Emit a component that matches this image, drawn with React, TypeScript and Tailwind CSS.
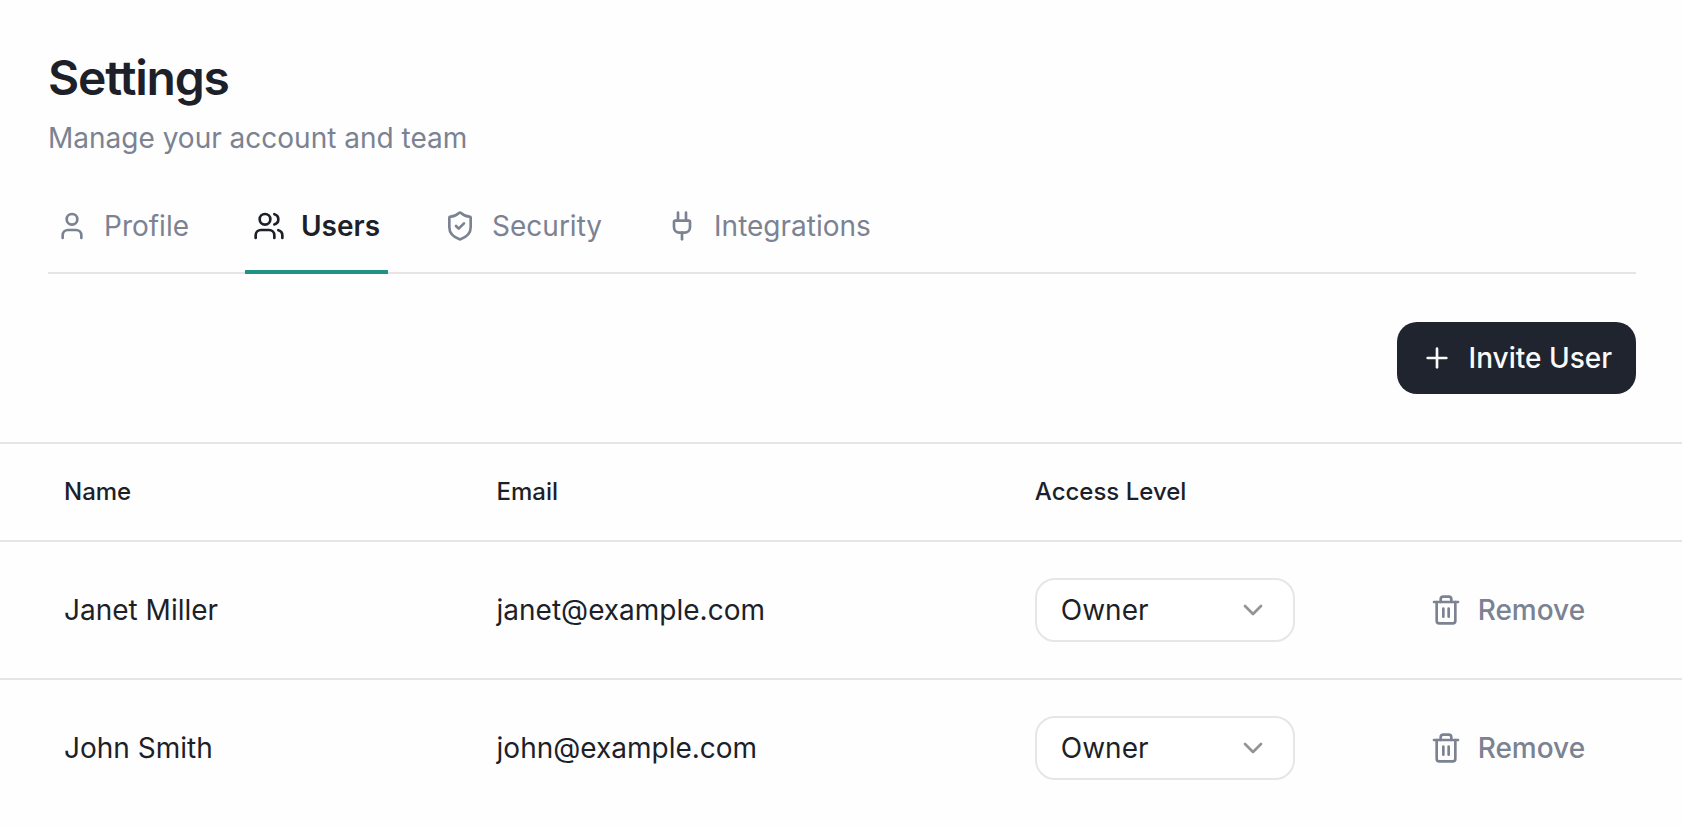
import { ChevronDown, Plug, Plus, ShieldCheck, Trash2, User, Users } from "lucide-react";
import { useState } from "react";

interface IUser {
  name: string;
  email: string;
  role: string;
}

const tabs = [
  { name: "Profile", Icon: User },
  { name: "Users", Icon: Users },
  { name: "Security", Icon: ShieldCheck },
  { name: "Integrations", Icon: Plug },
];

const roles = ["Owner", "Admin", "Member"];

const initialUsers: IUser[] = [
  { name: "Janet Miller", email: "janet@example.com", role: "Owner" },
  { name: "John Smith", email: "john@example.com", role: "Owner" },
];

const RoleSelect = ({
  user,
  onChange,
}: {
  user: IUser;
  onChange: (role: string) => void;
}) => {
  return (
    <div className="relative w-[260px]">
      <select
        aria-label={`Access level for ${user.name}`}
        value={user.role}
        onChange={(e) => onChange(e.target.value)}
        className="block h-16 w-full appearance-none rounded-[20px] border-2 border-[#e5e7e7] bg-white px-6"
      >
        {roles.map((role) => (
          <option key={role}>{role}</option>
        ))}
      </select>
      <ChevronDown
        size={32}
        className="pointer-events-none absolute top-4 right-[26px] text-[#939496]"
      />
    </div>
  );
};

const App = () => {
  const [activeTab, setActiveTab] = useState("Users");
  const [users, setUsers] = useState<IUser[]>(initialUsers);

  const handleChangeRole = (email: string, role: string) => {
    setUsers((prev) => prev.map((el) => (el.email === email ? { ...el, role } : el)));
  };

  const handleRemove = (email: string) => {
    setUsers((prev) => prev.filter((el) => el.email !== email));
  };

  return (
    <main className="min-h-screen bg-[#fefefe] pt-[46px] font-[Inter,sans-serif] text-[28px] leading-10 text-[#1d1f29]">
      <div className="pr-[46px] pl-12">
        <h1 className="text-5xl leading-[64px] font-semibold tracking-tight">Settings</h1>
        <p className="mt-2 text-[#7b8292]">Manage your account and team</p>

        <nav className="mt-8 flex gap-12 border-b-2 border-[#e5e5e6]">
          {tabs.map(({ name, Icon }) => (
            <button
              key={name}
              onClick={() => setActiveTab(name)}
              className={
                activeTab === name
                  ? "-mb-0.5 flex items-center gap-4 border-b-4 border-[#1f9384] px-2 pt-4 pb-6 font-semibold"
                  : "-mb-0.5 flex items-center gap-4 border-b-4 border-transparent px-2 pt-4 pb-6 text-[#7b8292]"
              }
            >
              <Icon size={32} />
              {name}
            </button>
          ))}
        </nav>

        <div className="flex justify-end py-12">
          <button className="flex h-[72px] items-center gap-4 rounded-[20px] bg-[#20242f] px-6 font-medium text-[#fafafa]">
            <Plus size={32} />
            Invite User
          </button>
        </div>
      </div>

      <table className="w-full table-fixed border-t-2 border-[#e5e5e6] text-left">
        <thead>
          <tr className="border-b-2 border-[#e5e5e6] text-2xl leading-10">
            <th className="w-2/7 py-7 pl-16 font-medium">Name</th>
            <th className="w-8/25 py-7 pl-4 font-medium">Email</th>
            <th className="w-[23%] py-7 pl-4 font-medium">Access Level</th>
            <td></td>
          </tr>
        </thead>
        <tbody>
          {users.map((user) => (
            <tr key={user.email} className="border-b-2 border-[#e5e5e6] last:border-b-0">
              <td className="py-9 pl-16">{user.name}</td>
              <td className="py-9 pl-4">{user.email}</td>
              <td className="py-9 pl-4">
                <RoleSelect
                  user={user}
                  onChange={(role) => handleChangeRole(user.email, role)}
                />
              </td>
              <td className="py-9">
                <button
                  onClick={() => handleRemove(user.email)}
                  className="flex h-16 items-center gap-4 px-6 font-medium text-[#7b8292]"
                >
                  <Trash2 size={32} />
                  Remove
                </button>
              </td>
            </tr>
          ))}
        </tbody>
      </table>
    </main>
  );
};

export default App;
